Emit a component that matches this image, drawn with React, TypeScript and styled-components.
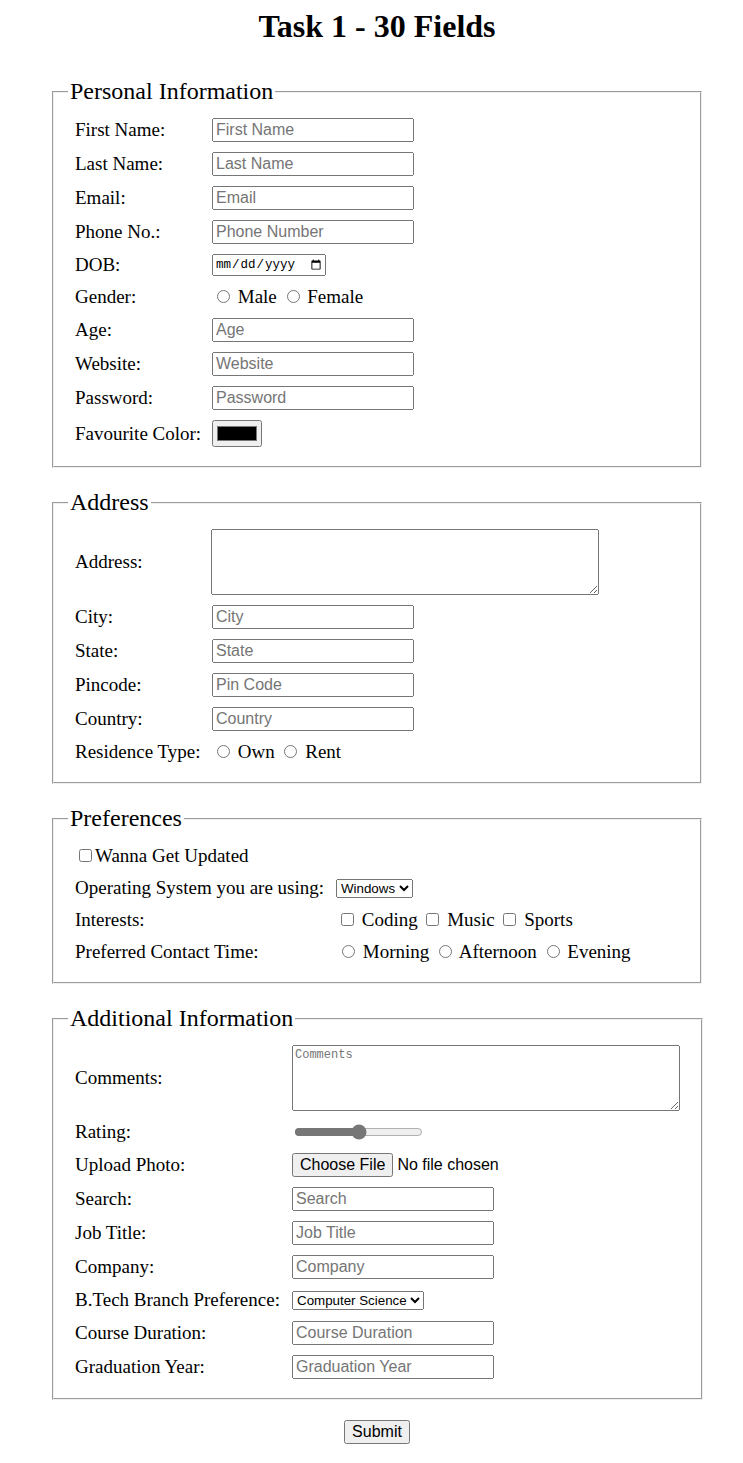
import React from 'react';
import styled, { createGlobalStyle } from 'styled-components';

const GlobalStyle = createGlobalStyle`
  body {
    margin: 0;
    background: #ffffff;
    color: #000000;
    font-family: 'Liberation Serif', 'Times New Roman', serif;
  }
`;

const Page = styled.div`
  padding: 8px 41px 40px 52px;
`;

const Title = styled.h1`
  margin: 0 0 33px;
  text-align: center;
  font-size: 32px;
  font-weight: bold;
  line-height: normal;
`;

const Form = styled.form`
  display: block;
`;

const Fieldset = styled.fieldset`
  margin: 0 0 21px;
  padding: 8px 14px 14px 14px;
  font-size: 19px;
`;

const Legend = styled.legend`
  font-size: 24px;
  padding: 0 2px;
`;

const Rows = styled.div`
  display: flex;
  flex-direction: column;
  padding: 0 7px;
`;

interface RowProps {
  $label: number;
}

const Row = styled.div<RowProps>`
  display: grid;
  grid-template-columns: ${(p) => p.$label}px auto;
  align-items: center;
  padding: 5px 0;
`;

const FullRow = styled.div`
  display: block;
  padding: 5px 0;
  line-height: normal;
`;

const Label = styled.label`
  font-size: 19px;
  line-height: normal;
`;

const Choices = styled.div`
  font-size: 19px;
  line-height: normal;
  white-space: nowrap;
`;

const TextInput = styled.input`
  width: 202px;
  box-sizing: border-box;
  height: 24px;
  font-family: 'Liberation Sans', Arial, sans-serif;
  font-size: 16px;
  margin: 0;
`;

const DateInput = styled.input`
  width: 114px;
  height: 22px;
  box-sizing: border-box;
  margin: 0;
  font-family: 'Liberation Mono', monospace;
  font-size: 12.5px;
`;

const ColorInput = styled.input`
  width: 50px;
  height: 27px;
  margin: 0;
`;

const TextArea = styled.textarea`
  width: 388px;
  height: 66px;
  box-sizing: border-box;
  margin: 0;
  font-family: 'Liberation Mono', monospace;
  font-size: 12px;
  display: block;
`;

const Radio = styled.input`
  margin: 3px 3px 0 5px;
`;

const Check = styled.input`
  margin: 3px 3px 3px 4px;
`;

const Select = styled.select`
  justify-self: start;
  margin: 0;
  font-family: 'Liberation Sans', Arial, sans-serif;
  font-size: 13.33px;
`;

const Range = styled.input`
  width: 129px;
  margin: 2px;
  accent-color: #767676;
`;

const FileInput = styled.input`
  margin: 0;
  font-family: 'Liberation Sans', Arial, sans-serif;
  font-size: 16px;
`;

const Actions = styled.div`
  text-align: center;
  margin-top: -1px;
`;

const SubmitButton = styled.button`
  font-family: 'Liberation Sans', Arial, sans-serif;
  font-size: 16px;
  margin: 0;
`;

const personal = [
  ['First Name:', 'First Name', 'text'],
  ['Last Name:', 'Last Name', 'text'],
  ['Email:', 'Email', 'email'],
  ['Phone No.:', 'Phone Number', 'tel'],
];

const personalRest = [
  ['Age:', 'Age', 'number'],
  ['Website:', 'Website', 'url'],
  ['Password:', 'Password', 'password'],
];

const address = [
  ['City:', 'City'],
  ['State:', 'State'],
  ['Pincode:', 'Pin Code'],
  ['Country:', 'Country'],
];

const work = [
  ['Search:', 'Search', 'search'],
  ['Job Title:', 'Job Title', 'text'],
  ['Company:', 'Company', 'text'],
];

function App() {
  return (
    <Page>
      <GlobalStyle />
      <Title>Task 1 - 30 Fields</Title>
      <Form onSubmit={(e) => e.preventDefault()}>
        <Fieldset>
          <Legend>Personal Information</Legend>
          <Rows>
            {personal.map(([label, ph, type]) => (
              <Row $label={137} key={label}>
                <Label>{label}</Label>
                <TextInput type={type} placeholder={ph} />
              </Row>
            ))}
            <Row $label={137}>
              <Label>DOB:</Label>
              <DateInput type="date" />
            </Row>
            <Row $label={137}>
              <Label>Gender:</Label>
              <Choices>
                <Radio type="radio" name="gender" />{' '}Male{' '}
                <Radio type="radio" name="gender" />{' '}Female
              </Choices>
            </Row>
            {personalRest.map(([label, ph, type]) => (
              <Row $label={137} key={label}>
                <Label>{label}</Label>
                <TextInput type={type} placeholder={ph} />
              </Row>
            ))}
            <Row $label={137}>
              <Label>Favourite Color:</Label>
              <ColorInput type="color" defaultValue="#000000" />
            </Row>
          </Rows>
        </Fieldset>

        <Fieldset>
          <Legend>Address</Legend>
          <Rows>
            <Row $label={136}>
              <Label>Address:</Label>
              <TextArea />
            </Row>
            {address.map(([label, ph]) => (
              <Row $label={137} key={label}>
                <Label>{label}</Label>
                <TextInput type="text" placeholder={ph} />
              </Row>
            ))}
            <Row $label={137}>
              <Label>Residence Type:</Label>
              <Choices>
                <Radio type="radio" name="residence" />{' '}Own{' '}
                <Radio type="radio" name="residence" />{' '}Rent
              </Choices>
            </Row>
          </Rows>
        </Fieldset>

        <Fieldset>
          <Legend>Preferences</Legend>
          <Rows>
            <FullRow>
              <Check type="checkbox" />Wanna Get Updated
            </FullRow>
            <Row $label={261}>
              <Label>Operating System you are using:</Label>
              <Select defaultValue="Windows">
                <option>Windows</option>
                <option>macOS</option>
                <option>Linux</option>
              </Select>
            </Row>
            <Row $label={262}>
              <Label>Interests:</Label>
              <Choices>
                <Check type="checkbox" />{' '}Coding{' '}
                <Check type="checkbox" />{' '}Music{' '}
                <Check type="checkbox" />{' '}Sports
              </Choices>
            </Row>
            <Row $label={262}>
              <Label>Preferred Contact Time:</Label>
              <Choices>
                <Radio type="radio" name="contact" />{' '}Morning{' '}
                <Radio type="radio" name="contact" />{' '}Afternoon{' '}
                <Radio type="radio" name="contact" />{' '}Evening
              </Choices>
            </Row>
          </Rows>
        </Fieldset>

        <Fieldset>
          <Legend>Additional Information</Legend>
          <Rows>
            <Row $label={217}>
              <Label>Comments:</Label>
              <TextArea placeholder="Comments" />
            </Row>
            <Row $label={217}>
              <Label>Rating:</Label>
              <Range type="range" min={0} max={10} defaultValue={5} />
            </Row>
            <Row $label={217}>
              <Label>Upload Photo:</Label>
              <FileInput type="file" />
            </Row>
            {work.map(([label, ph, type]) => (
              <Row $label={217} key={label}>
                <Label>{label}</Label>
                <TextInput type={type} placeholder={ph} />
              </Row>
            ))}
            <Row $label={217}>
              <Label>B.Tech Branch Preference:</Label>
              <Select defaultValue="Computer Science">
                <option>Computer Science</option>
                <option>Electronics</option>
                <option>Mechanical</option>
                <option>Civil</option>
              </Select>
            </Row>
            <Row $label={217}>
              <Label>Course Duration:</Label>
              <TextInput type="text" placeholder="Course Duration" />
            </Row>
            <Row $label={217}>
              <Label>Graduation Year:</Label>
              <TextInput type="text" placeholder="Graduation Year" />
            </Row>
          </Rows>
        </Fieldset>

        <Actions>
          <SubmitButton type="submit">Submit</SubmitButton>
        </Actions>
      </Form>
    </Page>
  );
}

export default App;
